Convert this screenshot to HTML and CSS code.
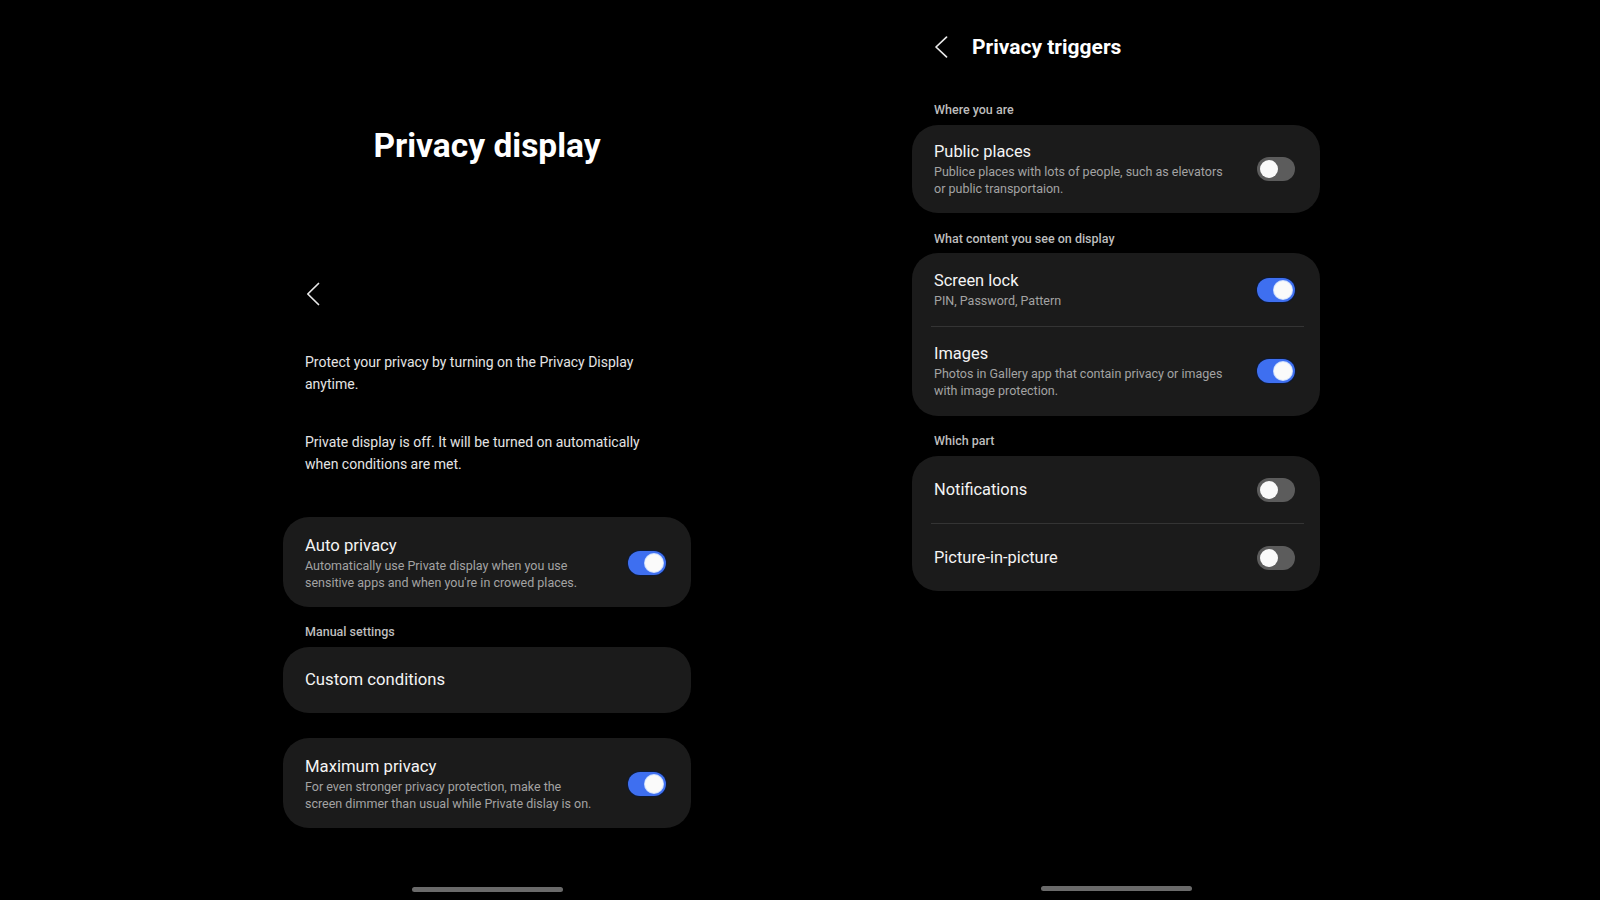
FILE: index.html
```html
<!DOCTYPE html>
<html lang="en">
<head>
<meta charset="utf-8">
<title>Privacy display</title>
<link rel="stylesheet" href="styles.css">
</head>
<body>
<div class="screens">
  <section class="panel panel-left">
    <h1 class="big-title">Privacy display</h1>
    <svg class="back back-left" width="14" height="24" viewBox="0 0 14 24"><path d="M12.5 1.5 L1.8 12 L12.5 22.5" fill="none" stroke="#e8e8e8" stroke-width="1.7" stroke-linecap="round" stroke-linejoin="round"/></svg>
    <p class="intro intro-1">Protect your privacy by turning on the Privacy Display anytime.</p>
    <p class="intro intro-2">Private display is off. It will be turned on automatically when conditions are met.</p>

    <div class="card card-auto">
      <div class="row">
        <div class="text">
          <div class="title">Auto privacy</div>
          <div class="sub">Automatically use Private display when you use sensitive apps and when you're in crowed places.</div>
        </div>
        <span class="toggle on"><span class="knob"></span></span>
      </div>
    </div>

    <div class="section-label label-manual">Manual settings</div>
    <div class="card card-custom">
      <div class="row row-single">
        <div class="text"><div class="title">Custom conditions</div></div>
      </div>
    </div>

    <div class="card card-max">
      <div class="row">
        <div class="text">
          <div class="title">Maximum privacy</div>
          <div class="sub">For even stronger privacy protection, make the screen dimmer than usual while Private dislay is on.</div>
        </div>
        <span class="toggle on"><span class="knob"></span></span>
      </div>
    </div>

    <div class="home-bar"></div>
  </section>

  <section class="panel panel-right">
    <header class="header">
      <svg class="back" width="14" height="22" viewBox="0 0 14 22"><path d="M12.5 1.2 L2 11 L12.5 20.8" fill="none" stroke="#e8e8e8" stroke-width="1.7" stroke-linecap="round" stroke-linejoin="round"/></svg>
      <h2 class="header-title">Privacy triggers</h2>
    </header>

    <div class="section-label label-where">Where you are</div>
    <div class="card">
      <div class="row row-r1">
        <div class="text">
          <div class="title">Public places</div>
          <div class="sub">Publice places with lots of people, such as elevators or public transportaion.</div>
        </div>
        <span class="toggle"><span class="knob"></span></span>
      </div>
    </div>

    <div class="section-label label-what">What content you see on display</div>
    <div class="card">
      <div class="row row-r2">
        <div class="text">
          <div class="title">Screen lock</div>
          <div class="sub">PIN, Password, Pattern</div>
        </div>
        <span class="toggle on"><span class="knob"></span></span>
      </div>
      <div class="divider"></div>
      <div class="row row-r3">
        <div class="text">
          <div class="title">Images</div>
          <div class="sub">Photos in Gallery app that contain privacy or images with image protection.</div>
        </div>
        <span class="toggle on"><span class="knob"></span></span>
      </div>
    </div>

    <div class="section-label label-which">Which part</div>
    <div class="card">
      <div class="row row-r4">
        <div class="text"><div class="title">Notifications</div></div>
        <span class="toggle"><span class="knob"></span></span>
      </div>
      <div class="divider"></div>
      <div class="row row-r5">
        <div class="text"><div class="title">Picture-in-picture</div></div>
        <span class="toggle"><span class="knob"></span></span>
      </div>
    </div>

    <div class="home-bar home-bar-right"></div>
  </section>
</div>
</body>
</html>
```

FILE: styles.css
```css
* { box-sizing: border-box; }
html, body {
  margin: 0;
  padding: 0;
  background: #000;
  width: 1600px;
  height: 900px;
  overflow: hidden;
  font-family: Roboto, "Noto Sans", "Liberation Sans", sans-serif;
  color: #f2f2f2;
}
.screens {
  display: flex;
  gap: 221px;
  padding: 0 280px 0 283px;
  height: 900px;
}
.panel {
  flex: 1;
  display: flex;
  flex-direction: column;
  height: 900px;
}

/* left */
.big-title {
  margin: 125px 0 0;
  font-size: 33.5px;
  line-height: 42px;
  font-weight: 700;
  text-align: center;
  color: #fff;
}
.back { display: block; flex: none; }
.back-left { margin: 115px 0 0 23px; }
.intro {
  margin: 0;
  padding: 0 20px 0 22px;
  font-size: 14px;
  line-height: 22px;
  color: #e4e4e4;
}
.intro-1 { margin-top: 45px; }
.intro-2 { margin-top: 36px; }

.card {
  background: #1b1b1b;
  border-radius: 26px;
}
.card-auto { margin-top: 42px; }
.card-max { margin-top: 25px; }

.row {
  display: flex;
  align-items: center;
  justify-content: space-between;
  gap: 20px;
  padding: 18px 25px 16px 22px;
}
.row-single { padding: 22px 25px 22px 22px; }
.text { flex: 1; min-width: 0; }
.title {
  font-size: 16.7px;
  line-height: 22px;
  color: #f4f4f4;
}
.sub {
  font-size: 12.5px;
  line-height: 17px;
  color: #a3a3a3;
  padding-right: 8px;
}
.section-label {
  padding-left: 22px;
  font-size: 12.5px;
  line-height: 17px;
  font-weight: 500;
  color: #bdbdbd;
}
.label-manual { margin-top: 16px; margin-bottom: 7px; }

.toggle {
  flex: none;
  position: relative;
  width: 38px;
  height: 24px;
  border-radius: 12px;
  background: #5c5c5c;
}
.toggle .knob {
  position: absolute;
  top: 3px;
  left: 3px;
  width: 18px;
  height: 18px;
  border-radius: 50%;
  background: #fafafa;
}
.toggle.on { background: #3e6ff0; box-shadow: 0 0 0 1px #0d1a36; }
.toggle.on .knob { left: auto; right: 3px; box-shadow: 0 0 0 1px #cfe0ff; }

.home-bar {
  margin: auto auto 8px;
  width: 151px;
  height: 5px;
  border-radius: 3px;
  background: #6a6a6a;
}
.home-bar-right { margin-bottom: 9px; }

/* right */
.header {
  display: flex;
  align-items: center;
  gap: 24px;
  margin-top: 33px;
  padding-left: 22px;
  height: 28px;
}
.header-title {
  margin: 0;
  font-size: 21px;
  line-height: 28px;
  font-weight: 700;
  color: #fff;
}
.label-where { margin-top: 40px; margin-bottom: 7px; }
.label-what { margin-top: 17px; margin-bottom: 6px; }
.label-which { margin-top: 16px; margin-bottom: 7px; }

.panel-right .title { font-size: 16.4px; }
.row-r1 { padding-top: 16px; padding-bottom: 16px; }
.row-r2 { padding-top: 17px; padding-bottom: 17px; }
.row-r3 { padding-top: 16px; padding-bottom: 17px; }
.row-r4 { padding-top: 22px; padding-bottom: 21px; }
.row-r5 { padding-top: 22px; padding-bottom: 21px; }

.divider {
  height: 1px;
  margin: 0 16px 0 19px;
  background: #343434;
}
```
